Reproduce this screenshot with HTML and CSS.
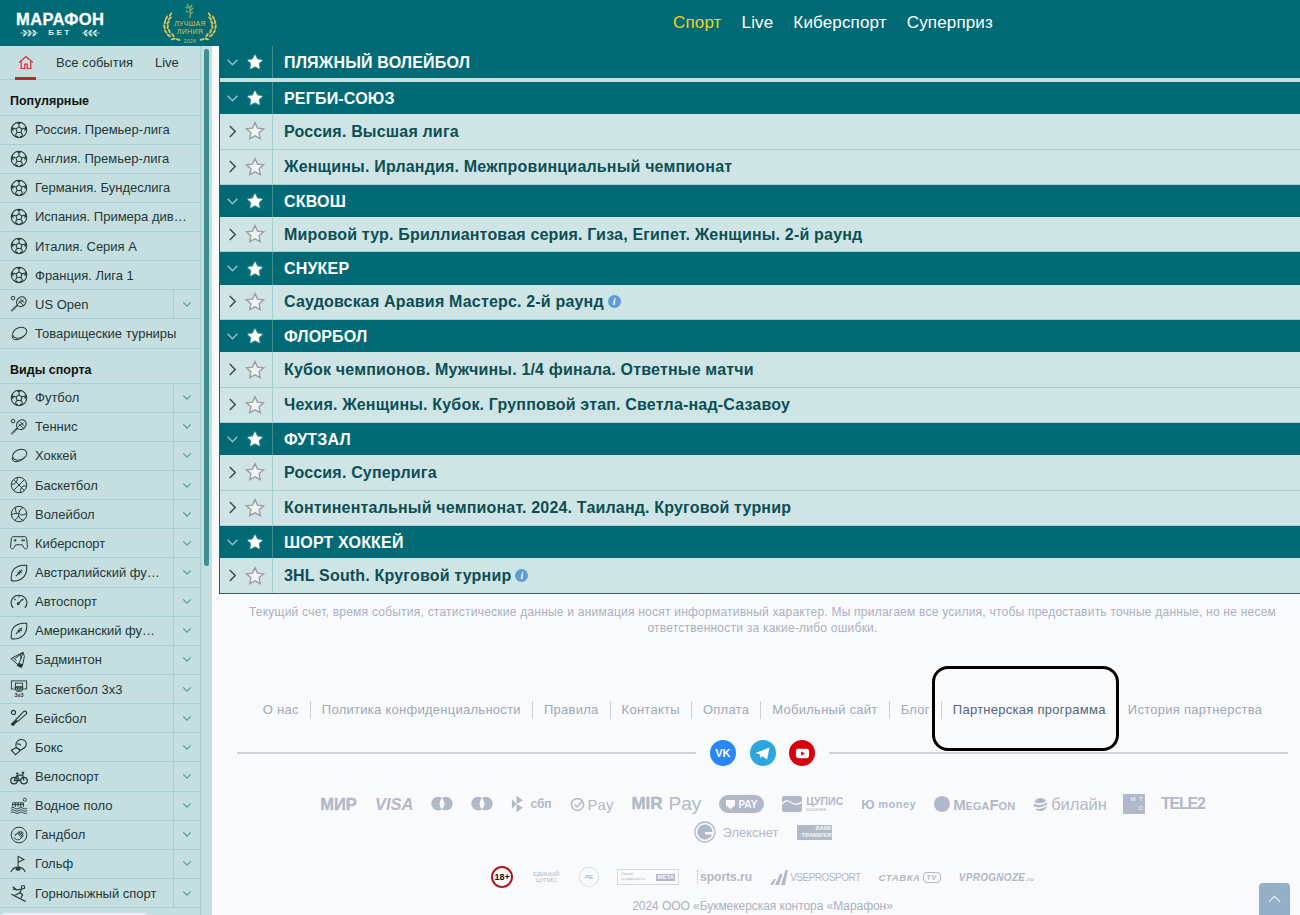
FILE: index.html
```html
<!DOCTYPE html>
<html lang="ru">
<head>
    <meta charset="UTF-8">
    <meta name="viewport" content="width=device-width, initial-scale=1.0">
    <title>Марафон Бет</title>
    <link rel="stylesheet" href="styles.css">
</head>
<body>

<!-- Icon set -->
<svg class="sprite" xmlns="http://www.w3.org/2000/svg">
    <symbol id="i-down" viewBox="0 0 12 8"><path d="M1.5 1.5 6 6l4.5-4.5" fill="none" stroke="currentColor" stroke-width="1.4"/></symbol>
    <symbol id="i-right" viewBox="0 0 8 12"><path d="M1.5 1 6.5 6l-5 5" fill="none" stroke="currentColor" stroke-width="1.4"/></symbol>
    <symbol id="i-star" viewBox="0 0 20 20"><path d="M10 1.6l2.5 5.5 6 .7-4.4 4 1.2 5.9L10 14.8l-5.3 2.9 1.2-5.9-4.4-4 6-.7z"/></symbol>
    <symbol id="i-ball" viewBox="0 0 20 20"><g fill="none" stroke="currentColor" stroke-width="1.2"><circle cx="10" cy="10" r="8.6"/><path d="M10 6.5l3.3 2.4-1.2 3.9H7.9L6.7 8.9zM10 6.5V3.5M13.3 8.9l3-1M12.1 12.8l1.9 2.6M7.9 12.8 6 15.4M6.7 8.9l-3-1"/></g><path d="M7 2 10 3.8 13 2 10 1.2zM18 6.5l-2.2 1.6.6 3.6 1.6-2.2zM2 6.5l2.2 1.6-.6 3.6L2 9.5zM4.8 15.8l3.4.6 1.800 1.900-3.400-.4zM15.200 15.800l-3.400.6-1.800 1.900 3.400-.4z" fill="currentColor"/></symbol>
    <symbol id="i-racket" viewBox="0 0 20 20"><g fill="none" stroke="currentColor" stroke-width="1.1"><ellipse cx="12.6" cy="7.4" rx="5" ry="5.8" transform="rotate(42 12.6 7.4)"/><path d="M9 9.5l6-4M9.5 6.5l5.5 5M11 4l5 5"/><path d="M8.6 11.4 3.6 17l-1.2 1.1-1-1 1.1-1.3 5.4-4.9"/><circle cx="3.4" cy="3.4" r="2"/></g></symbol>
    <symbol id="i-puck" viewBox="0 0 20 20"><g fill="none" stroke="currentColor" stroke-width="1.1"><ellipse cx="10.8" cy="8.6" rx="8.2" ry="5.6" transform="rotate(-22 10.8 8.6)"/><path d="M2.6 11.4c-.6 2.8 1 5 4 5 4.2 0 9-2.8 11-6.4"/></g></symbol>
    <symbol id="i-basket" viewBox="0 0 20 20"><g fill="none" stroke="currentColor" stroke-width="1.1"><circle cx="10" cy="10" r="8.6"/><path d="M4 4l12 12M16 4 4 16M8 1.7c.6 3-.6 5-2.2 6.4-1.2.9-2.8 1.100-4.200.9M18.400 11c-1.800-.2-3.600 0-4.700.8C12 13 11.400 15.300 12 18.300"/></g></symbol>
    <symbol id="i-volley" viewBox="0 0 20 20"><g fill="none" stroke="currentColor" stroke-width="1.1"><circle cx="10" cy="10" r="8.6"/><path d="M10 10c0-3 1.5-6 4.5-7.2M10 10c-2.8-1.2-5.8-1-8 1M10 10c-.6 3.2-2.5 5.8-4.8 7M6.5 2.3C5.700 5.300 6.300 8 8 9.500M18.400 9c-2.200 2-5 2.500-7.200 1.600M15.200 17c-2.400-.2-4.700-2-5.700-5"/></g></symbol>
    <symbol id="i-pad" viewBox="0 0 20 20"><g fill="none" stroke="currentColor" stroke-width="1.1"><path d="M3.6 3h12.8c1.3 0 1.9.7 2.1 2l.9 9c.2 1.5-.6 2.5-1.9 2.5-1.1 0-1.7-.5-2.2-1.4l-1.600-3.100H6.300l-1.600 3.100c-.5.9-1.100 1.400-2.200 1.400-1.300 0-2.100-1-1.900-2.500l.9-9C1.700 3.700 2.300 3 3.600 3z"/><path d="M4.200 7h3M5.700 5.500v3"/><circle cx="13.500" cy="7" r=".7"/><circle cx="15.500" cy="7" r=".7"/></g></symbol>
    <symbol id="i-oval" viewBox="0 0 20 20"><g fill="none" stroke="currentColor" stroke-width="1.2"><path d="M18.500 1.500C12 .8 6.500 3 3.600 6.600 1.600 9.500 1 14 1.500 18.500c4.500.8 10-.5 13.500-4 2.800-3 4-7.800 3.500-13z"/><path d="M6.500 13.500l7-7M8.500 8.700l2.800 2.800M10.300 7l2.800 2.800"/></g></symbol>
    <symbol id="i-speed" viewBox="0 0 20 20"><g fill="none" stroke="currentColor" stroke-width="1.2"><path d="M3.600 16.500C1.200 14 .7 10 2.400 6.800 4 4 6.800 2.500 10 2.500S16 4 17.600 6.800c1.700 3.200 1.200 7.200-1.200 9.700"/><path d="M9.500 11.500l4-4.500M5 6.600 6.200 8M10 3v2M15 6.600 13.800 8"/><circle cx="9.200" cy="11.800" r="1.100"/></g></symbol>
    <symbol id="i-shuttle" viewBox="0 0 20 20"><g fill="none" stroke="currentColor" stroke-width="1.1"><path d="M1 8.500 14.500 1.500 16 6l-2 9.500-3 1.500zM6 8 14.500 1.500 10.500 13M3.500 7l3.500 4M11.500 3l1 5.500"/><path d="M9.500 13.500l4.500 2-1.500 3-4.500-2.500z" fill="currentColor"/></g></symbol>
    <symbol id="i-hoop" viewBox="0 0 20 20"><g fill="none" stroke="currentColor" stroke-width="1"><rect x="1.500" y="1" width="17" height="9"/><rect x="6" y="3.500" width="8" height="4"/><path d="M5.500 8h9l-1.500 4.500H7zM8 8l1.500 4.500M12 8l-1.500 4.500"/></g><text x="10" y="19.400" class="mini-ico" text-anchor="middle">3x3</text></symbol>
    <symbol id="i-bat" viewBox="0 0 20 20"><g fill="none" stroke="currentColor" stroke-width="1.2"><path d="M18 3c.9.900.6 2-.4 3L8.500 14l-2-2L15 3c1-.9 2.100-.9 3 0z"/><path d="M6.500 12 3 15.500l-.8.300-.5 1.200 1.300 1.300 1.200-.5.300-.8L8 13.500" fill="currentColor"/><circle cx="3.800" cy="3.800" r="2.300"/></g></symbol>
    <symbol id="i-glove" viewBox="0 0 20 20"><g fill="none" stroke="currentColor" stroke-width="1.2"><path d="M7 10.500C5.600 7.500 6.800 3.500 10.500 2c3.400-1.200 7 .5 7.600 3.600.4 2.800-1.600 5.500-4.800 7l-1.800 1z"/><path d="M7.500 7c1.800-.8 3.500-.3 4.500 1.300M7 10.500 1.500 13.600 6 18.500l5.500-4.500z"/></g></symbol>
    <symbol id="i-bike" viewBox="0 0 20 20"><g fill="none" stroke="currentColor" stroke-width="1.400"><circle cx="4.500" cy="14" r="3.700"/><circle cx="15.500" cy="14" r="3.700"/><path d="M4.500 14 8 8h6l1.500 6M8 8l2.500 6h-6M13 5h2l-1 3M6.500 6h3"/></g></symbol>
    <symbol id="i-water" viewBox="0 0 20 20"><g fill="none" stroke="currentColor" stroke-width="1"><path d="M3 11V6.500h12V11M3 8.500h12M6 6.500V11M9 6.500V11M12 6.500V11"/><circle cx="16.500" cy="3" r="1.800"/><path d="M1 12.500c1.500-1 3-1 4.500 0s3 1 4.500 0 3-1 4.500 0 3 1 4.500 0M1 15c1.500-1 3-1 4.500 0s3 1 4.500 0 3-1 4.500 0 3 1 4.500 0M1 17.500c1.500-1 3-1 4.500 0s3 1 4.500 0 3-1 4.500 0 3 1 4.500 0"/></g></symbol>
    <symbol id="i-hand" viewBox="0 0 20 20"><g fill="none" stroke="currentColor" stroke-width="1.1"><circle cx="10" cy="10" r="8.700"/><path d="M4.500 12.500c1 2.500 3.500 3.500 6 2.500l4-3.500c.8-.8-.2-1.800-1-1l-2 1.500 3-3.500c.7-.8-.3-1.700-1-1l-3 3 2.500-3.500c.5-.8-.5-1.500-1.200-.8l-2.800 3.300 1.500-2.500c.4-.8-.6-1.200-1.100-.6L6 10.500l-.3-1.700"/></g></symbol>
    <symbol id="i-golf" viewBox="0 0 20 20"><g fill="none" stroke="currentColor" stroke-width="1.2"><path d="M9 15V1.500l6.500 3.500L9 8"/><path d="M1 19c1.500-3.700 4-5.500 8-5.500s6.500 1.800 8 5.500"/><ellipse cx="9" cy="15.800" rx="2.400" ry="1" fill="currentColor"/></g></symbol>
    <symbol id="i-ski" viewBox="0 0 20 20"><g fill="none" stroke="currentColor" stroke-width="1.300"><circle cx="14.500" cy="3.500" r="1.800"/><path d="M13 5.500 8 6.500l-5-1M13 5.500 11 9.500l3 2.500-2 3.500M11 9.500 7 12l-3 .5M1.500 11.500l16 8M3 3l5 4"/></g></symbol>
    <symbol id="i-sprig" viewBox="0 0 20 8">
        <path d="M0 4h19" fill="none" stroke="currentColor" stroke-width=".7"/>
        <g fill="currentColor">
            <ellipse cx="5" cy="2.200" rx="2.400" ry=".9" transform="rotate(35 5 2.200)"/>
            <ellipse cx="5" cy="5.800" rx="2.400" ry=".9" transform="rotate(-35 5 5.800)"/>
            <ellipse cx="10" cy="2.200" rx="2.400" ry=".9" transform="rotate(35 10 2.200)"/>
            <ellipse cx="10" cy="5.800" rx="2.400" ry=".9" transform="rotate(-35 10 5.800)"/>
            <ellipse cx="15" cy="2.200" rx="2.400" ry=".9" transform="rotate(35 15 2.200)"/>
            <ellipse cx="15" cy="5.800" rx="2.400" ry=".9" transform="rotate(-35 15 5.800)"/>
        </g>
    </symbol>
    <symbol id="i-branch" viewBox="0 0 24 40">
        <g fill="currentColor">
            <ellipse cx="19" cy="37" rx="3.200" ry="1.300" transform="rotate(15 19 37)"/>
            <ellipse cx="13" cy="36.500" rx="3.200" ry="1.300" transform="rotate(-12 13 36.500)"/>
            <ellipse cx="12.500" cy="31.500" rx="3.200" ry="1.300" transform="rotate(55 12.500 31.500)"/>
            <ellipse cx="7.500" cy="32" rx="3.200" ry="1.300" transform="rotate(30 7.500 32)"/>
            <ellipse cx="8" cy="26.500" rx="3.200" ry="1.300" transform="rotate(70 8 26.500)"/>
            <ellipse cx="3.500" cy="27" rx="3.200" ry="1.300" transform="rotate(55 3.500 27)"/>
            <ellipse cx="6" cy="21" rx="3.200" ry="1.300" transform="rotate(100 6 21)"/>
            <ellipse cx="1.800" cy="21" rx="3.200" ry="1.300" transform="rotate(80 1.800 21)"/>
            <ellipse cx="6.500" cy="15.500" rx="3.200" ry="1.300" transform="rotate(125 6.500 15.500)"/>
            <ellipse cx="2.500" cy="15" rx="3.200" ry="1.300" transform="rotate(105 2.500 15)"/>
            <ellipse cx="8.500" cy="10.500" rx="3.200" ry="1.300" transform="rotate(140 8.500 10.500)"/>
            <ellipse cx="4.500" cy="9.500" rx="3.200" ry="1.300" transform="rotate(120 4.500 9.500)"/>
            <ellipse cx="9.500" cy="5.500" rx="3.200" ry="1.300" transform="rotate(125 9.500 5.500)"/>
        </g>
    </symbol>
</svg>

<header class="topbar">
    <div class="logo">
        <div class="logo-name">МАРАФОН</div>
        <div class="logo-sub">
            <svg><use href="#i-sprig"/></svg>
            <span>БЕТ</span>
            <svg class="flip"><use href="#i-sprig"/></svg>
        </div>
    </div>
    <div class="award">
        <svg class="branch"><use href="#i-branch"/></svg>
        <svg class="wheat" viewBox="0 0 10 16"><path d="M3 1c3 3 4 8 3 14M6 5l2-3M6 8l3-3M6.5 11l2.5-2M4 5 1.500 4M4.500 9 2 8" fill="none" stroke="#7fa86a" stroke-width="1.400"/></svg>
        <div class="award-text">ЛУЧШАЯ<br>ЛИНИЯ<small>2024</small></div>
        <svg class="branch flip"><use href="#i-branch"/></svg>
    </div>
    <nav class="topnav">
        <a class="active">Спорт</a>
        <a>Live</a>
        <a>Киберспорт</a>
        <a>Суперприз</a>
    </nav>
</header>

<div class="page">
    <aside class="side">
        <div class="side-list">
            <div class="tabs">
                <span class="tab-home">
                    <svg viewBox="0 0 20 18"><path d="M1.500 9 10 1.500 18.500 9M4 7v9.500h4.500V11h3v5.500H16V7" fill="none" stroke="currentColor" stroke-width="1.500"/></svg>
                </span>
                <span class="tab">Все события</span>
                <span class="tab">Live</span>
            </div>

            <div class="side-title first">Популярные</div>
            <div class="item"><svg class="ico"><use href="#i-ball"/></svg><span class="name">Россия. Премьер-лига</span></div>
            <div class="item"><svg class="ico"><use href="#i-ball"/></svg><span class="name">Англия. Премьер-лига</span></div>
            <div class="item"><svg class="ico"><use href="#i-ball"/></svg><span class="name">Германия. Бундеслига</span></div>
            <div class="item"><svg class="ico"><use href="#i-ball"/></svg><span class="name">Испания. Примера див…</span></div>
            <div class="item"><svg class="ico"><use href="#i-ball"/></svg><span class="name">Италия. Серия А</span></div>
            <div class="item"><svg class="ico"><use href="#i-ball"/></svg><span class="name">Франция. Лига 1</span></div>
            <div class="item"><svg class="ico"><use href="#i-racket"/></svg><span class="name">US Open</span><span class="more"><svg><use href="#i-down"/></svg></span></div>
            <div class="item"><svg class="ico"><use href="#i-puck"/></svg><span class="name">Товарищеские турниры</span></div>

            <div class="side-title">Виды спорта</div>
            <div class="item"><svg class="ico"><use href="#i-ball"/></svg><span class="name">Футбол</span><span class="more"><svg><use href="#i-down"/></svg></span></div>
            <div class="item"><svg class="ico"><use href="#i-racket"/></svg><span class="name">Теннис</span><span class="more"><svg><use href="#i-down"/></svg></span></div>
            <div class="item"><svg class="ico"><use href="#i-puck"/></svg><span class="name">Хоккей</span><span class="more"><svg><use href="#i-down"/></svg></span></div>
            <div class="item"><svg class="ico"><use href="#i-basket"/></svg><span class="name">Баскетбол</span><span class="more"><svg><use href="#i-down"/></svg></span></div>
            <div class="item"><svg class="ico"><use href="#i-volley"/></svg><span class="name">Волейбол</span><span class="more"><svg><use href="#i-down"/></svg></span></div>
            <div class="item"><svg class="ico"><use href="#i-pad"/></svg><span class="name">Киберспорт</span><span class="more"><svg><use href="#i-down"/></svg></span></div>
            <div class="item"><svg class="ico"><use href="#i-oval"/></svg><span class="name">Австралийский фу…</span><span class="more"><svg><use href="#i-down"/></svg></span></div>
            <div class="item"><svg class="ico"><use href="#i-speed"/></svg><span class="name">Автоспорт</span><span class="more"><svg><use href="#i-down"/></svg></span></div>
            <div class="item"><svg class="ico"><use href="#i-oval"/></svg><span class="name">Американский фу…</span><span class="more"><svg><use href="#i-down"/></svg></span></div>
            <div class="item"><svg class="ico"><use href="#i-shuttle"/></svg><span class="name">Бадминтон</span><span class="more"><svg><use href="#i-down"/></svg></span></div>
            <div class="item"><svg class="ico"><use href="#i-hoop"/></svg><span class="name">Баскетбол 3х3</span><span class="more"><svg><use href="#i-down"/></svg></span></div>
            <div class="item"><svg class="ico"><use href="#i-bat"/></svg><span class="name">Бейсбол</span><span class="more"><svg><use href="#i-down"/></svg></span></div>
            <div class="item"><svg class="ico"><use href="#i-glove"/></svg><span class="name">Бокс</span><span class="more"><svg><use href="#i-down"/></svg></span></div>
            <div class="item"><svg class="ico"><use href="#i-bike"/></svg><span class="name">Велоспорт</span><span class="more"><svg><use href="#i-down"/></svg></span></div>
            <div class="item"><svg class="ico"><use href="#i-water"/></svg><span class="name">Водное поло</span><span class="more"><svg><use href="#i-down"/></svg></span></div>
            <div class="item"><svg class="ico"><use href="#i-hand"/></svg><span class="name">Гандбол</span><span class="more"><svg><use href="#i-down"/></svg></span></div>
            <div class="item"><svg class="ico"><use href="#i-golf"/></svg><span class="name">Гольф</span><span class="more"><svg><use href="#i-down"/></svg></span></div>
            <div class="item"><svg class="ico"><use href="#i-ski"/></svg><span class="name">Горнолыжный спорт</span><span class="more"><svg><use href="#i-down"/></svg></span></div>
            <div class="side-pill"></div>
        </div>
        <div class="side-track"><div class="side-thumb"></div></div>
    </aside>

    <main class="main">
        <section class="events">
            <div class="head spaced"><span class="arrow"><svg class="down"><use href="#i-down"/></svg></span><span class="fav"><svg class="star-on"><use href="#i-star"/></svg></span><span class="title">Пляжный волейбол</span></div>

            <div class="head"><span class="arrow"><svg class="down"><use href="#i-down"/></svg></span><span class="fav"><svg class="star-on"><use href="#i-star"/></svg></span><span class="title">Регби-союз</span></div>
            <div class="row"><span class="arrow"><svg class="right"><use href="#i-right"/></svg></span><span class="fav"><svg class="star-off"><use href="#i-star"/></svg></span><span class="title">Россия. Высшая лига</span></div>
            <div class="row"><span class="arrow"><svg class="right"><use href="#i-right"/></svg></span><span class="fav"><svg class="star-off"><use href="#i-star"/></svg></span><span class="title">Женщины. Ирландия. Межпровинциальный чемпионат</span></div>

            <div class="head"><span class="arrow"><svg class="down"><use href="#i-down"/></svg></span><span class="fav"><svg class="star-on"><use href="#i-star"/></svg></span><span class="title">Сквош</span></div>
            <div class="row"><span class="arrow"><svg class="right"><use href="#i-right"/></svg></span><span class="fav"><svg class="star-off"><use href="#i-star"/></svg></span><span class="title">Мировой тур. Бриллиантовая серия. Гиза, Египет. Женщины. 2-й раунд</span></div>

            <div class="head"><span class="arrow"><svg class="down"><use href="#i-down"/></svg></span><span class="fav"><svg class="star-on"><use href="#i-star"/></svg></span><span class="title">Снукер</span></div>
            <div class="row"><span class="arrow"><svg class="right"><use href="#i-right"/></svg></span><span class="fav"><svg class="star-off"><use href="#i-star"/></svg></span><span class="title">Саудовская Аравия Мастерс. 2-й раунд</span><span class="info">i</span></div>

            <div class="head"><span class="arrow"><svg class="down"><use href="#i-down"/></svg></span><span class="fav"><svg class="star-on"><use href="#i-star"/></svg></span><span class="title">Флорбол</span></div>
            <div class="row"><span class="arrow"><svg class="right"><use href="#i-right"/></svg></span><span class="fav"><svg class="star-off"><use href="#i-star"/></svg></span><span class="title">Кубок чемпионов. Мужчины. 1/4 финала. Ответные матчи</span></div>
            <div class="row"><span class="arrow"><svg class="right"><use href="#i-right"/></svg></span><span class="fav"><svg class="star-off"><use href="#i-star"/></svg></span><span class="title">Чехия. Женщины. Кубок. Групповой этап. Светла-над-Сазавоу</span></div>

            <div class="head"><span class="arrow"><svg class="down"><use href="#i-down"/></svg></span><span class="fav"><svg class="star-on"><use href="#i-star"/></svg></span><span class="title">Футзал</span></div>
            <div class="row"><span class="arrow"><svg class="right"><use href="#i-right"/></svg></span><span class="fav"><svg class="star-off"><use href="#i-star"/></svg></span><span class="title">Россия. Суперлига</span></div>
            <div class="row"><span class="arrow"><svg class="right"><use href="#i-right"/></svg></span><span class="fav"><svg class="star-off"><use href="#i-star"/></svg></span><span class="title">Континентальный чемпионат. 2024. Таиланд. Круговой турнир</span></div>

            <div class="head"><span class="arrow"><svg class="down"><use href="#i-down"/></svg></span><span class="fav"><svg class="star-on"><use href="#i-star"/></svg></span><span class="title">Шорт хоккей</span></div>
            <div class="row"><span class="arrow"><svg class="right"><use href="#i-right"/></svg></span><span class="fav"><svg class="star-off"><use href="#i-star"/></svg></span><span class="title">3HL South. Круговой турнир</span><span class="info">i</span></div>
        </section>

        <footer class="foot">
            <p class="note">Текущий счет, время события, статистические данные и анимация носят информативный характер. Мы прилагаем все усилия, чтобы предоставить точные данные, но не несем ответственности за какие-либо ошибки.</p>

            <div class="links">
                <a>О нас</a>
                <a>Политика конфиденциальности</a>
                <a>Правила</a>
                <a>Контакты</a>
                <a>Оплата</a>
                <a>Мобильный сайт</a>
                <a>Блог</a>
                <a class="hot">Партнерская программа</a>
                <a>История партнерства</a>
            </div>

            <div class="social">
                <span class="soc vk">VK</span>
                <span class="soc tg"><svg viewBox="0 0 16 14"><path d="M.5 6.500 15.500.5 13 13.500 7.500 9.800 5.800 12l-.6-4z" fill="#fff"/></svg></span>
                <span class="soc yt"><svg viewBox="0 0 16 12"><rect x="1" y="1" width="14" height="10" rx="2.500" fill="#fff"/><path d="M6.500 3.500v5l4-2.500z" fill="#d9000d"/></svg></span>
            </div>

            <div class="pays">
                <span class="pay p-mir">МИР</span>
                <span class="pay p-visa">VISA</span>
                <span class="pay p-mc"><svg viewBox="0 0 24 16"><circle cx="7.800" cy="7.500" r="7.500"/><circle cx="16.200" cy="7.500" r="7.500"/><path d="M12 1.500a8 8 0 0 1 0 12 8 8 0 0 1 0-12z" fill="#f9fafb"/></svg></span>
                <span class="pay p-mc"><svg viewBox="0 0 24 16"><circle cx="7.800" cy="7.500" r="7.500"/><circle cx="16.200" cy="7.500" r="7.500"/><path d="M12 1.500a8 8 0 0 1 0 12 8 8 0 0 1 0-12z" fill="#f9fafb"/></svg></span>
                <span class="pay p-sbp"><svg viewBox="0 0 14 20"><path d="M1 5l5 5-5 5zM6 1l7 5-7 4zM6 10l7 4-7 5z"/></svg><b>сбп</b></span>
                <span class="pay p-gpay"><svg viewBox="0 0 16 16"><circle cx="8" cy="8" r="6.500" fill="none" stroke="currentColor" stroke-width="1.600"/><path d="M5 8l2.500 2.500 6-6.500" fill="none" stroke="currentColor" stroke-width="1.600"/></svg>Pay</span>
                <span class="pay p-mirpay"><b>MIR</b>Pay</span>
                <span class="pay p-tpay"><svg viewBox="0 0 10 10"><path d="M0 0h10v6L5 10 0 6z" fill="#f9fafb"/></svg>PAY</span>
                <span class="pay p-cup"><svg viewBox="0 0 20 16"><path d="M2 0h16a2 2 0 0 1 2 2v12a2 2 0 0 1-2 2H2a2 2 0 0 1-2-2V2a2 2 0 0 1 2-2z"/><path d="M0 8c4-5 7-3 10-1s6 2 10-1" fill="none" stroke="#f9fafb" stroke-width="1.500"/></svg><b>ЦУПИС<small>кошелек</small></b></span>
                <span class="pay p-money"><b>Ю</b>money</span>
                <span class="pay p-mega"><i></i>MegaFon</span>
                <span class="pay p-bee"><svg viewBox="0 0 16 16"><circle cx="8" cy="8" r="7"/><path d="M1 6c5 3 9 2 14-1M1.500 11c5 2 9 1 13-2" fill="none" stroke="#f9fafb" stroke-width="1.700"/></svg>билайн</span>
                <span class="pay p-mts">м т<br>с</span>
                <span class="pay p-tele">TELE2</span>
                <span class="pay-break"></span>
                <span class="pay p-elex"><svg viewBox="0 0 22 22"><circle cx="11" cy="11" r="10" fill="none" stroke="currentColor" stroke-width="1.300"/><path d="M11 3.500a7.500 7.500 0 1 0 7 10H11V11h7.500A7.500 7.500 0 0 0 11 3.500z"/></svg>Элекснет</span>
                <span class="pay p-bank">BANK<br>TRANSFER</span>
            </div>

            <div class="partners">
                <span class="p18">18+</span>
                <span class="pt-edin">единый<br>цупис</span>
                <span class="pt-rb">РБ</span>
                <span class="pt-meta"><small>Лучшие<br>коэффициенты</small><b>МЕТА</b></span>
                <span class="pt-sports">sports.ru</span>
                <span class="pt-vse"><svg viewBox="0 0 18 15"><path d="M0 15 4 9h2L3 15zM5 15 10 4h2.500L9 15zM11 15 15.500 0H18l-3 15z"/></svg>VSEPROSPORT</span>
                <span class="pt-stavka">СТАВКА<i>TV</i></span>
                <span class="pt-vprog">VPROGNOZE<small>.ru</small></span>
            </div>

            <div class="copy">2024 ООО «Букмекерская контора «Марафон»</div>
        </footer>

        <!-- Ramka poverh ssylok -->
        <div class="mark"></div>
        <a class="to-top"><svg viewBox="0 0 14 8"><path d="M1 7l6-6 6 6" fill="none" stroke="currentColor" stroke-width="1.300"/></svg></a>
    </main>
</div>

</body>
</html>
```

FILE: styles.css
```css
/* Obshchie stili */
* {
    box-sizing: border-box;
}
html, body {
    height: 100%;
}
body {
    margin: 0;
    font-family: 'Liberation Sans', Arial, sans-serif;
    background-color: #f9fafb;
    color: #1f3638;
    overflow: hidden;
}
.sprite {
    display: none;
}
.flip {
    transform: scaleX(-1);
}

/* Shapka */
.topbar {
    height: 46px;
    display: flex;
    align-items: center;
    padding-left: 16px;
    background-color: #026a74;
    color: #fff;
}
.logo {
    width: 88px;
    text-align: center;
    padding-top: 2px;
}
.logo-name {
    font-size: 16.5px;
    font-weight: bold;
    line-height: 18px;
    letter-spacing: 0.4px;
    -webkit-text-stroke: 0.3px #fff;
}
.logo-sub {
    display: flex;
    align-items: center;
    justify-content: space-between;
    font-size: 8px;
    font-weight: bold;
    letter-spacing: 2.5px;
    line-height: 10px;
    padding: 0 4px;
    color: #e6f2f2;
}
.logo-sub svg {
    width: 19px;
    height: 8px;
}
.award {
    width: 54px;
    height: 42px;
    margin-left: 59px;
    margin-top: 2px;
    display: flex;
    justify-content: space-between;
    color: #d7c455;
    position: relative;
}
.branch {
    width: 19px;
    height: 38px;
    margin-top: 4px;
}
.wheat {
    position: absolute;
    left: 21px;
    top: 0;
    width: 10px;
    height: 16px;
}
.award-text {
    width: 40px;
    margin: 0 -13px;
    flex: none;
    font-size: 7px;
    line-height: 8px;
    text-align: center;
    padding-top: 17px;
    letter-spacing: 0.3px;
}
.award-text small {
    display: block;
    font-size: 5px;
    line-height: 11px;
}
.topnav {
    display: flex;
    gap: 20px;
    margin-left: 456px;
    font-size: 17px;
    letter-spacing: 0.15px;
}
.topnav .active {
    color: #f5cf1e;
}

/* Levaya kolonka */
.page {
    display: flex;
    height: 869px;
}
.side {
    width: 212px;
    flex: none;
    display: flex;
    overflow: hidden;
    background-color: #c5dfe1;
}
.side-list {
    width: 201px;
    flex: none;
    border-right: 1px solid #a7cfd1;
}
.side-track {
    flex: 1;
    padding: 3px 3px 0;
}
.side-thumb {
    height: 517px;
    border-radius: 3px;
    background-color: #3f8f90;
}
.tabs {
    display: flex;
    height: 34px;
    border-bottom: 1px solid #a7cfd1;
    font-size: 13px;
    color: #1f3638;
}
.tab-home {
    width: 21px;
    margin-left: 15px;
    height: 34px;
    display: flex;
    justify-content: center;
    padding-top: 9px;
    border-bottom: 3px solid #c8232c;
    color: #c8323a;
}
.tab-home svg {
    width: 16px;
    height: 15px;
}
.tab {
    line-height: 33px;
    margin-left: 20px;
}
.tab:last-child {
    margin-left: 22px;
}
.side-title {
    height: 35px;
    padding: 14px 0 0 10px;
    font-size: 12.5px;
    font-weight: bold;
    line-height: 14px;
    color: #111;
    border-bottom: 1px solid #a7cfd1;
}
.side-title.first {
    height: 35.5px;
}
.item {
    height: 29.15px;
    display: flex;
    align-items: center;
    padding-left: 10px;
    font-size: 13px;
    border-bottom: 1px solid #a7cfd1;
}
.ico {
    width: 18px;
    height: 18px;
    flex: none;
    color: #24383a;
}
.mini-ico {
    font-family: 'Liberation Sans', Arial, sans-serif;
    font-size: 6px;
    font-weight: bold;
    fill: currentColor;
}
.name {
    flex: 1;
    min-width: 0;
    margin-left: 7px;
    white-space: nowrap;
}
.more {
    width: 27px;
    height: 100%;
    flex: none;
    display: flex;
    align-items: center;
    justify-content: center;
    border-left: 1px solid #a7cfd1;
    color: #4f9a9c;
}
.more svg {
    width: 10px;
    height: 7px;
}
.side-pill {
    width: 149px;
    height: 12px;
    margin-top: 4px;
    border: 1px solid #cfe0ea;
    border-radius: 6px;
    background-color: #e5f0f6;
}

/* Spisok sobytij */
.main {
    flex: 1;
    min-width: 0;
    padding-left: 7px;
    background-color: #f9fafb;
}
.events {
    border-left: 1px solid #35595b;
    border-bottom: 1px solid #35595b;
}
.head, .row {
    display: flex;
    align-items: center;
    font-size: 16px;
    font-weight: bold;
    letter-spacing: 0.18px;
}
.head {
    height: 32.3px;
    background-color: #026a74;
    color: #fff;
    text-transform: uppercase;
}
.head.spaced {
    height: 36px;
    border-bottom: 4px solid #c5dfe1;
}
.row {
    height: 35.3px;
    background-color: #cfe4e5;
    color: #0b4f55;
    border-bottom: 1px solid #a7cfd1;
}
.row:last-child {
    border-bottom: 0;
}
.arrow {
    width: 24px;
    flex: none;
    display: flex;
    justify-content: center;
}
.fav {
    width: 29px;
    height: 100%;
    flex: none;
    display: flex;
    align-items: center;
    justify-content: center;
    padding-right: 7px;
    border-right: 1px solid #a7cfd1;
}
.head .fav {
    border-right-color: #3f8f90;
}
.down {
    width: 13px;
    height: 9px;
    color: #8fc4c8;
}
.right {
    width: 9px;
    height: 13px;
    color: #3c4f52;
}
.star-on {
    width: 18px;
    height: 18px;
    fill: #fff;
    filter: drop-shadow(0 0 1px rgba(255, 255, 255, 0.5));
}
.star-off {
    width: 20px;
    height: 20px;
    fill: #eef5f5;
    stroke: #9a9fa2;
    stroke-width: 1.4;
}
.title {
    margin-left: 11px;
    padding-top: 1px;
    white-space: nowrap;
}
.info {
    width: 13px;
    height: 13px;
    margin-left: 4px;
    border-radius: 50%;
    background-color: #5b9bd6;
    color: #fff;
    font-family: 'Liberation Serif', serif;
    font-size: 10px;
    font-style: italic;
    line-height: 13px;
    text-align: center;
}

/* Podval */
.foot {
    padding: 0 12px 0 18px;
    text-align: center;
    color: #a9b1c2;
}
.note {
    margin: 10px 0 0;
    font-size: 12px;
    line-height: 16px;
    letter-spacing: 0.23px;
}
.links {
    display: flex;
    justify-content: center;
    margin-top: 65px;
    font-size: 13px;
    line-height: 18px;
    letter-spacing: 0.27px;
    color: #9ea7ba;
}
.links a {
    padding: 0 11px;
    border-left: 1px solid #c9cfdb;
}
.links a:first-child {
    border-left: 0;
}
.links .hot {
    color: #53647e;
}
.links .hot + a {
    border-left: 0;
}
.social {
    display: flex;
    align-items: center;
    gap: 13.7px;
    margin-top: 21px;
}
.social::before, .social::after {
    content: "";
    flex: 1;
    height: 2px;
    background-color: #cdd1de;
}
.soc {
    width: 26px;
    height: 26px;
    border-radius: 50%;
    display: flex;
    align-items: center;
    justify-content: center;
    color: #fff;
    font-size: 11px;
    font-weight: bold;
}
.soc svg {
    width: 15px;
    height: 13px;
}
.vk {
    background-color: #2787f5;
}
.tg {
    background-color: #2ca5e0;
}
.yt {
    background-color: #d9000d;
}

/* Platezhi */
.pays {
    display: flex;
    flex-wrap: wrap;
    justify-content: center;
    align-items: center;
    column-gap: 18px;
    margin-top: 25px;
    color: #b1b9c9;
    fill: #b1b9c9;
}
.pay {
    height: 26px;
    display: flex;
    align-items: center;
    white-space: nowrap;
}
.pay-break {
    width: 100%;
    height: 2px;
}
.p-mir {
    font-size: 16.5px;
    font-weight: bold;
    -webkit-text-stroke: 0.4px #b1b9c9;
}
.p-visa {
    font-size: 16.5px;
    font-weight: bold;
    font-style: italic;
}
.p-mc svg {
    width: 22px;
    height: 16px;
}
.p-sbp {
    font-size: 12px;
    gap: 6px;
}
.p-sbp svg {
    width: 13px;
    height: 20px;
}
.p-gpay {
    font-size: 15px;
    gap: 3px;
}
.p-gpay svg {
    width: 15px;
    height: 15px;
}
.p-mirpay {
    font-size: 19px;
    gap: 6px;
}
.p-mirpay b {
    font-size: 17px;
    -webkit-text-stroke: 0.4px #b1b9c9;
}
.p-tpay {
    width: 45px;
    height: 18px;
    justify-content: center;
    gap: 3px;
    border-radius: 9px;
    background-color: #b1b9c9;
    color: #f9fafb;
    font-size: 10px;
    font-weight: bold;
}
.p-tpay svg {
    width: 9px;
    height: 9px;
}
.p-cup {
    gap: 4px;
    font-size: 10.5px;
}
.p-cup svg {
    width: 20px;
    height: 16px;
}
.p-cup b {
    line-height: 9px;
    text-align: left;
}
.p-cup small {
    display: block;
    font-size: 5px;
    font-weight: normal;
    line-height: 6px;
}
.p-money {
    font-size: 11px;
    font-weight: bold;
    letter-spacing: 0.5px;
}
.p-money b {
    font-size: 13px;
    margin-right: 3px;
}
.p-mega {
    font-size: 15px;
    font-weight: bold;
    font-variant: small-caps;
    gap: 3px;
}
.p-mega i {
    width: 16px;
    height: 16px;
    border-radius: 50%;
    background-color: #b1b9c9;
}
.p-bee {
    font-size: 16.5px;
    gap: 3px;
}
.p-bee svg {
    width: 15px;
    height: 15px;
}
.p-mts {
    width: 22px;
    height: 20px;
    display: block;
    margin-left: -2px;
    padding: 1px 2px;
    background-color: #b1b9c9;
    color: #f9fafb;
    font-size: 6px;
    line-height: 9px;
    text-align: right;
    text-transform: uppercase;
    word-spacing: 2px;
}
.p-tele {
    margin-left: -2px;
    font-size: 16px;
    font-weight: bold;
    letter-spacing: -1.2px;
}
.p-elex {
    font-size: 13px;
    gap: 7px;
}
.p-elex svg {
    width: 22px;
    height: 22px;
}
.p-bank {
    width: 35px;
    height: 15px;
    display: block;
    background-color: #b1b9c9;
    color: #f9fafb;
    font-size: 5.5px;
    font-weight: bold;
    font-style: italic;
    line-height: 7px;
    text-align: right;
}

/* Partnery */
.partners {
    display: flex;
    justify-content: center;
    align-items: center;
    gap: 18px;
    height: 24px;
    margin-top: 20px;
    color: #b1b9c9;
    fill: #b1b9c9;
}
.p18 {
    width: 22px;
    height: 22px;
    border: 2px solid #b01820;
    border-radius: 50%;
    background-color: #fff;
    color: #111;
    font-size: 9px;
    font-weight: bold;
    line-height: 18px;
}
.pt-edin {
    width: 30px;
    font-size: 6px;
    line-height: 6px;
    text-transform: uppercase;
}
.pt-rb {
    width: 20px;
    height: 20px;
    border: 1px dotted #b1b9c9;
    border-radius: 50%;
    font-size: 6px;
    font-weight: bold;
    font-style: italic;
    line-height: 18px;
}
.pt-meta {
    width: 62px;
    height: 16px;
    display: flex;
    align-items: center;
    justify-content: space-between;
    padding: 0 3px;
    border: 1px solid #d4d8e2;
    font-size: 4px;
    line-height: 5px;
    text-align: left;
}
.pt-meta b {
    padding: 1px;
    background-color: #b1b9c9;
    color: #f9fafb;
    font-size: 6px;
}
.pt-sports {
    padding-left: 2px;
    border-left: 1px dotted #b1b9c9;
    font-size: 12px;
    font-weight: bold;
}
.pt-vse {
    display: flex;
    align-items: center;
    gap: 2px;
    font-size: 10px;
    letter-spacing: -0.5px;
}
.pt-vse svg {
    width: 18px;
    height: 15px;
}
.pt-stavka {
    display: flex;
    align-items: center;
    gap: 2px;
    font-size: 9.5px;
    font-weight: bold;
    font-style: italic;
    letter-spacing: 0.6px;
}
.pt-stavka i {
    padding: 0 3px;
    border: 1px solid #b1b9c9;
    border-radius: 4px;
    font-size: 7px;
    line-height: 9px;
}
.pt-vprog {
    font-size: 10px;
    font-weight: bold;
    font-style: italic;
    letter-spacing: 0.3px;
}
.pt-vprog small {
    font-size: 6px;
}
.copy {
    margin-top: 10px;
    font-size: 12px;
    line-height: 14px;
    letter-spacing: -0.05px;
}

/* To, chto lezhit poverh */
.mark {
    position: absolute;
    left: 932px;
    top: 666px;
    width: 187px;
    height: 85px;
    border: 3px solid #000;
    border-radius: 16px;
}
.to-top {
    position: absolute;
    right: 10px;
    top: 883px;
    width: 31px;
    height: 32px;
    display: flex;
    align-items: center;
    justify-content: center;
    border-radius: 4px 4px 0 0;
    background-color: #94afc8;
    color: #e3ebf2;
}
.to-top svg {
    width: 13px;
    height: 8px;
}
```
